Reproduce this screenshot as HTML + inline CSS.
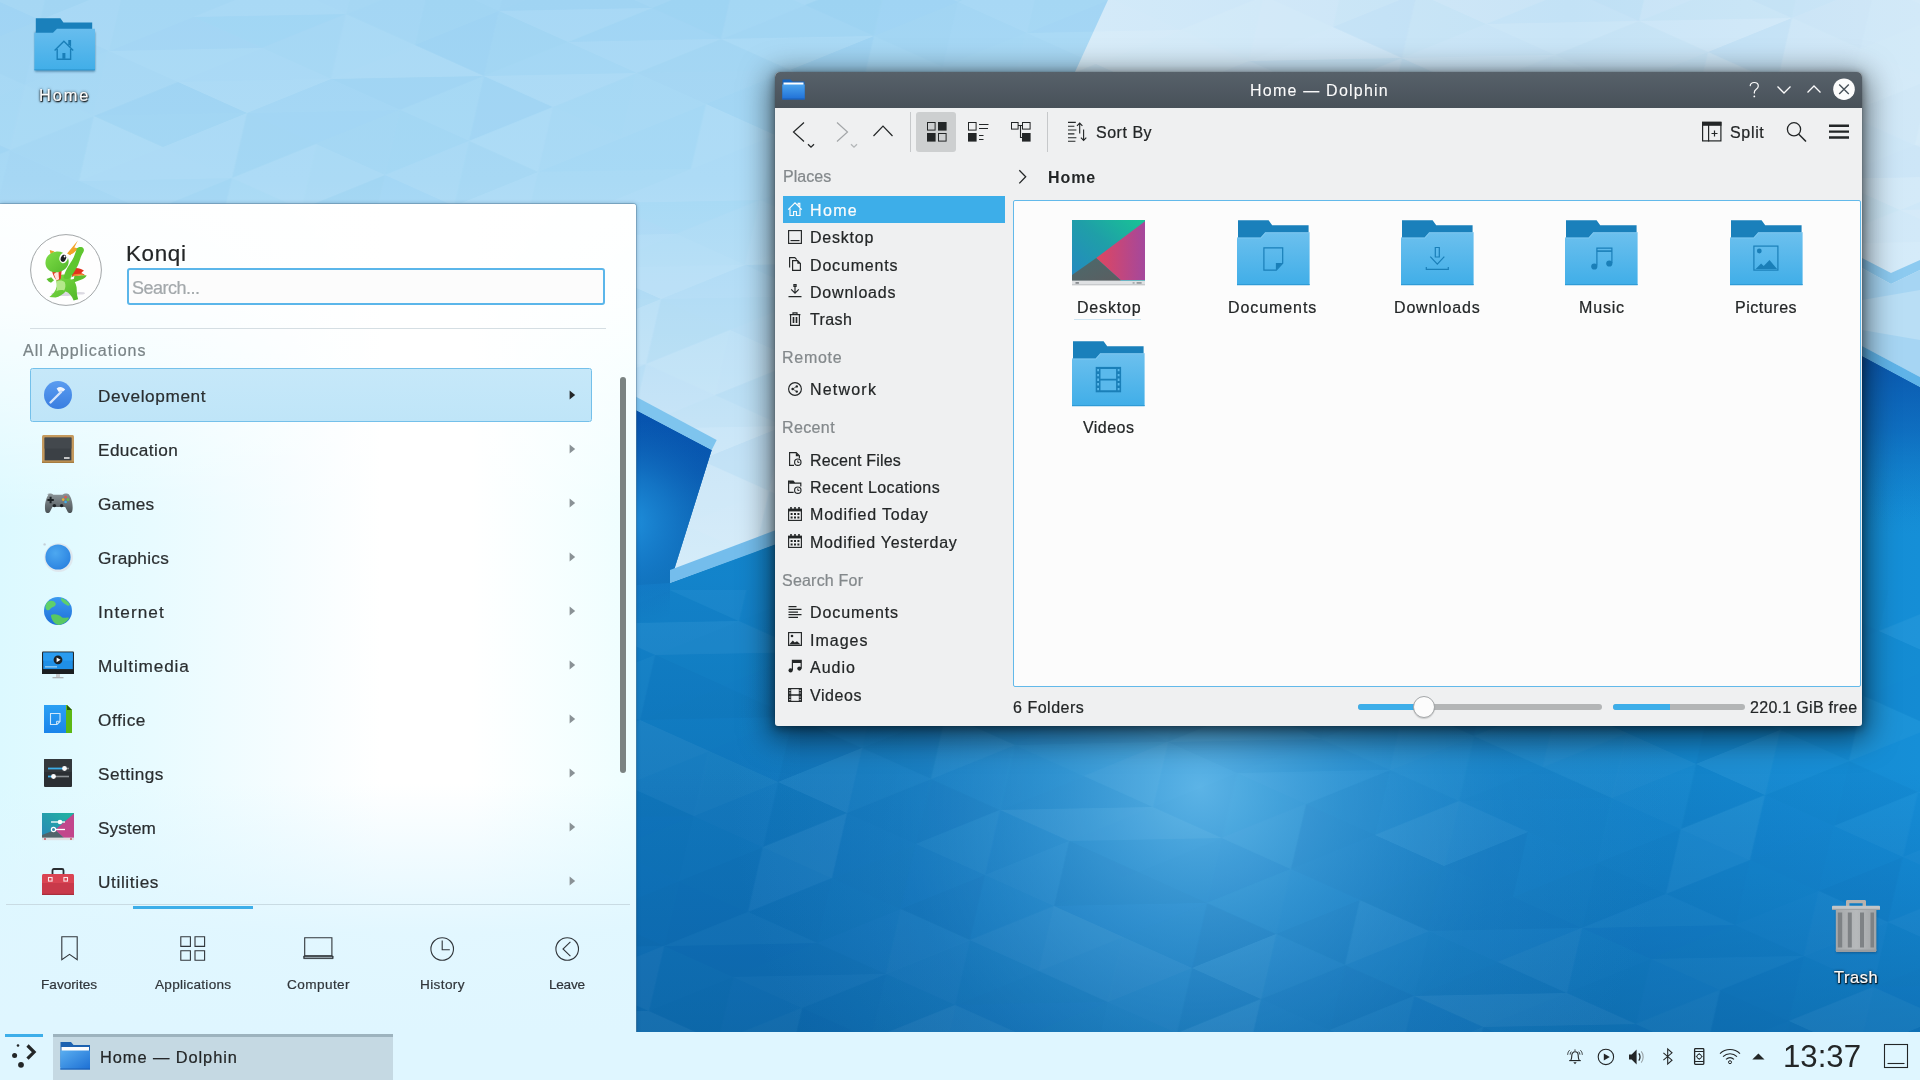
<!DOCTYPE html>
<html><head><meta charset="utf-8"><title>Plasma Desktop</title>
<style>
html,body{margin:0;padding:0;}
body{width:1920px;height:1080px;overflow:hidden;position:relative;background:#a6d8f4;font-family:"Liberation Sans",sans-serif;color:#232627;font-size:16px;}
.abs{position:absolute;}
.t{position:absolute;white-space:pre;line-height:1;will-change:transform;-webkit-text-stroke:.22px;}
svg{position:absolute;overflow:visible;}
#wall{left:0;top:0;}

#dol{position:absolute;left:775px;top:72px;width:1087px;height:654px;background:#eff0f1;border-radius:5px 5px 3px 3px;box-shadow:0 7px 30px 5px rgba(0,0,0,.55),0 2px 9px 1px rgba(0,0,0,.35),0 0 0 1px rgba(0,0,0,.05);}
#dtitle{position:absolute;left:0;top:0;width:1087px;height:36px;background:linear-gradient(#57616a,#485159);border-radius:5px 5px 0 0;}
#dview{position:absolute;left:238px;top:128px;width:846px;height:485px;background:#fcfcfc;border:1px solid #62b9ea;border-radius:2px;}
.sep{position:absolute;width:1px;background:#c6c8ca;top:40px;height:40px;}
.ic{stroke:#232627;fill:none;stroke-width:1;}
.fi{fill:#232627;stroke:none;}
.row{position:absolute;left:8px;width:222px;height:27px;}
#kick{position:absolute;left:0;top:204px;width:636px;height:828px;background:linear-gradient(90deg,#dcf9ff 0,#e8fbff 24%,#f6fdff 46%,#ffffff 60%,#ffffff 74%,#eefeff 100%);box-shadow:0 0 4px rgba(0,40,80,.35),0 0 0 1px rgba(110,150,175,.5);border-top-right-radius:3px;overflow:hidden;}
#kick .fade{position:absolute;left:0;top:0;width:636px;height:828px;background:linear-gradient(180deg,rgba(255,255,255,.95) 0,rgba(255,255,255,.85) 12%,rgba(255,255,255,0) 38%,rgba(223,246,255,0) 70%,rgba(223,246,255,.9) 88%,#dff6ff 100%);}
#panel{position:absolute;left:0;top:1032px;width:1920px;height:48px;background:#dff6ff;}
.dl{color:#fcfcfc;text-shadow:0 1px 2px rgba(0,0,0,.95),0 0 3px rgba(0,0,0,.7),1px 1px 1px rgba(0,0,0,.8);}
</style></head>
<body>
<svg id="wall" width="1920" height="1080" viewBox="0 0 1920 1080">
<defs>
<linearGradient id="sky" x1="0" y1="0" x2="0" y2="600" gradientUnits="userSpaceOnUse"><stop offset="0" stop-color="#a3d6f4"/><stop offset=".3" stop-color="#a8d9f5"/><stop offset=".7" stop-color="#c6e4f7"/><stop offset=".95" stop-color="#d4ebf9"/></linearGradient>
<linearGradient id="sea" x1="0" y1="0" x2="1" y2="0"><stop offset="0" stop-color="#0a6cb0"/><stop offset=".33" stop-color="#0f76bb"/><stop offset=".45" stop-color="#1076ba"/><stop offset=".8" stop-color="#1381c6"/><stop offset="1" stop-color="#158fd7"/></linearGradient>
<linearGradient id="seav" x1="0" y1="300" x2="0" y2="1080" gradientUnits="userSpaceOnUse"><stop offset="0" stop-color="#0a55a8" stop-opacity=".6"/><stop offset=".3" stop-color="#0a55a8" stop-opacity="0"/><stop offset=".6" stop-color="#0a55a8" stop-opacity="0"/><stop offset="1" stop-color="#0a5a96" stop-opacity=".6"/></linearGradient>
<radialGradient id="glow" cx="1200" cy="788" r="470" gradientUnits="userSpaceOnUse"><stop offset="0" stop-color="#62b9ea" stop-opacity=".92"/><stop offset=".3" stop-color="#45a5df" stop-opacity=".62"/><stop offset=".65" stop-color="#2f93d4" stop-opacity=".25"/><stop offset="1" stop-color="#2b8fd2" stop-opacity="0"/></radialGradient>
<radialGradient id="glowL" cx="626" cy="522" r="104" gradientUnits="userSpaceOnUse"><stop offset="0" stop-color="#2092de"/><stop offset=".45" stop-color="#167bca" stop-opacity=".75"/><stop offset="1" stop-color="#0f66b8" stop-opacity="0"/></radialGradient>
<linearGradient id="lbright" x1="0" y1="575" x2="0" y2="800" gradientUnits="userSpaceOnUse"><stop offset="0" stop-color="#1488d0" stop-opacity=".75"/><stop offset="1" stop-color="#1488d0" stop-opacity="0"/></linearGradient>
<linearGradient id="ldark" x1="0" y1="370" x2="0" y2="600" gradientUnits="userSpaceOnUse"><stop offset="0" stop-color="#0550ae"/><stop offset=".45" stop-color="#0958b0" stop-opacity=".95"/><stop offset=".75" stop-color="#0c62b4" stop-opacity=".55"/><stop offset="1" stop-color="#1072b8" stop-opacity="0"/></linearGradient>
<linearGradient id="rdark" x1="0" y1="356" x2="0" y2="520" gradientUnits="userSpaceOnUse"><stop offset="0" stop-color="#0a56ac" stop-opacity=".95"/><stop offset=".45" stop-color="#0c62b8" stop-opacity=".6"/><stop offset="1" stop-color="#1280cc" stop-opacity="0"/></linearGradient>
<linearGradient id="lite" x1="0" y1="0" x2="1" y2="0"><stop offset="0" stop-color="#d6ecf9"/><stop offset=".25" stop-color="#d0e8f8"/><stop offset=".6" stop-color="#c6e3f6"/><stop offset="1" stop-color="#d2e9f8"/></linearGradient>
<pattern id="tsky" width="6" height="6" patternUnits="userSpaceOnUse" patternTransform="matrix(69 31 -84 34 40 20)"><polygon points="0,0 1,0 1,1" fill="#ffffff" fill-opacity="0.007"/><polygon points="0,0 0,1 1,1" fill="#5aaee0" fill-opacity="0.020"/><polygon points="0,1 1,1 1,2" fill="#ffffff" fill-opacity="0.019"/><polygon points="0,1 0,2 1,2" fill="#5aaee0" fill-opacity="0.065"/><polygon points="0,2 1,2 1,3" fill="#ffffff" fill-opacity="0.051"/><polygon points="0,2 0,3 1,3" fill="#5aaee0" fill-opacity="0.036"/><polygon points="0,3 1,3 1,4" fill="#ffffff" fill-opacity="0.074"/><polygon points="0,3 0,4 1,4" fill="#5aaee0" fill-opacity="0.004"/><polygon points="0,4 1,4 0,5" fill="#5aaee0" fill-opacity="0.004"/><polygon points="1,4 1,5 0,5" fill="#ffffff" fill-opacity="0.021"/><polygon points="0,5 1,5 1,6" fill="#ffffff" fill-opacity="0.020"/><polygon points="0,5 0,6 1,6" fill="#ffffff" fill-opacity="0.055"/><polygon points="1,0 2,0 2,1" fill="#ffffff" fill-opacity="0.036"/><polygon points="1,0 1,1 2,1" fill="#ffffff" fill-opacity="0.026"/><polygon points="1,1 2,1 2,2" fill="#ffffff" fill-opacity="0.039"/><polygon points="1,1 1,2 2,2" fill="#ffffff" fill-opacity="0.014"/><polygon points="1,2 2,2 2,3" fill="#5aaee0" fill-opacity="0.070"/><polygon points="1,2 1,3 2,3" fill="#ffffff" fill-opacity="0.055"/><polygon points="1,3 2,3 2,4" fill="#ffffff" fill-opacity="0.033"/><polygon points="1,3 1,4 2,4" fill="#ffffff" fill-opacity="0.057"/><polygon points="1,4 2,4 1,5" fill="#ffffff" fill-opacity="0.063"/><polygon points="2,4 2,5 1,5" fill="#5aaee0" fill-opacity="0.016"/><polygon points="1,5 2,5 1,6" fill="#5aaee0" fill-opacity="0.008"/><polygon points="2,5 2,6 1,6" fill="#ffffff" fill-opacity="0.065"/><polygon points="2,0 3,0 2,1" fill="#5aaee0" fill-opacity="0.060"/><polygon points="3,0 3,1 2,1" fill="#5aaee0" fill-opacity="0.055"/><polygon points="2,1 3,1 3,2" fill="#ffffff" fill-opacity="0.070"/><polygon points="2,1 2,2 3,2" fill="#5aaee0" fill-opacity="0.010"/><polygon points="2,2 3,2 3,3" fill="#5aaee0" fill-opacity="0.030"/><polygon points="2,2 2,3 3,3" fill="#ffffff" fill-opacity="0.001"/><polygon points="2,3 3,3 3,4" fill="#5aaee0" fill-opacity="0.022"/><polygon points="2,3 2,4 3,4" fill="#ffffff" fill-opacity="0.013"/><polygon points="2,4 3,4 3,5" fill="#ffffff" fill-opacity="0.061"/><polygon points="2,4 2,5 3,5" fill="#ffffff" fill-opacity="0.027"/><polygon points="2,5 3,5 2,6" fill="#ffffff" fill-opacity="0.053"/><polygon points="3,5 3,6 2,6" fill="#ffffff" fill-opacity="0.074"/><polygon points="3,0 4,0 4,1" fill="#5aaee0" fill-opacity="0.051"/><polygon points="3,0 3,1 4,1" fill="#ffffff" fill-opacity="0.054"/><polygon points="3,1 4,1 3,2" fill="#ffffff" fill-opacity="0.061"/><polygon points="4,1 4,2 3,2" fill="#ffffff" fill-opacity="0.010"/><polygon points="3,2 4,2 3,3" fill="#5aaee0" fill-opacity="0.043"/><polygon points="4,2 4,3 3,3" fill="#ffffff" fill-opacity="0.050"/><polygon points="3,3 4,3 4,4" fill="#5aaee0" fill-opacity="0.032"/><polygon points="3,3 3,4 4,4" fill="#5aaee0" fill-opacity="0.065"/><polygon points="3,4 4,4 3,5" fill="#ffffff" fill-opacity="0.073"/><polygon points="4,4 4,5 3,5" fill="#5aaee0" fill-opacity="0.062"/><polygon points="3,5 4,5 3,6" fill="#5aaee0" fill-opacity="0.013"/><polygon points="4,5 4,6 3,6" fill="#5aaee0" fill-opacity="0.052"/><polygon points="4,0 5,0 5,1" fill="#ffffff" fill-opacity="0.040"/><polygon points="4,0 4,1 5,1" fill="#ffffff" fill-opacity="0.056"/><polygon points="4,1 5,1 5,2" fill="#ffffff" fill-opacity="0.017"/><polygon points="4,1 4,2 5,2" fill="#5aaee0" fill-opacity="0.068"/><polygon points="4,2 5,2 4,3" fill="#5aaee0" fill-opacity="0.025"/><polygon points="5,2 5,3 4,3" fill="#ffffff" fill-opacity="0.057"/><polygon points="4,3 5,3 4,4" fill="#ffffff" fill-opacity="0.001"/><polygon points="5,3 5,4 4,4" fill="#ffffff" fill-opacity="0.075"/><polygon points="4,4 5,4 5,5" fill="#5aaee0" fill-opacity="0.063"/><polygon points="4,4 4,5 5,5" fill="#ffffff" fill-opacity="0.015"/><polygon points="4,5 5,5 5,6" fill="#5aaee0" fill-opacity="0.045"/><polygon points="4,5 4,6 5,6" fill="#5aaee0" fill-opacity="0.014"/><polygon points="5,0 6,0 6,1" fill="#5aaee0" fill-opacity="0.052"/><polygon points="5,0 5,1 6,1" fill="#5aaee0" fill-opacity="0.069"/><polygon points="5,1 6,1 5,2" fill="#5aaee0" fill-opacity="0.028"/><polygon points="6,1 6,2 5,2" fill="#ffffff" fill-opacity="0.069"/><polygon points="5,2 6,2 5,3" fill="#5aaee0" fill-opacity="0.018"/><polygon points="6,2 6,3 5,3" fill="#5aaee0" fill-opacity="0.006"/><polygon points="5,3 6,3 6,4" fill="#ffffff" fill-opacity="0.022"/><polygon points="5,3 5,4 6,4" fill="#ffffff" fill-opacity="0.014"/><polygon points="5,4 6,4 6,5" fill="#ffffff" fill-opacity="0.018"/><polygon points="5,4 5,5 6,5" fill="#ffffff" fill-opacity="0.066"/><polygon points="5,5 6,5 6,6" fill="#5aaee0" fill-opacity="0.010"/><polygon points="5,5 5,6 6,6" fill="#ffffff" fill-opacity="0.033"/></pattern><pattern id="tsea" width="6" height="6" patternUnits="userSpaceOnUse" patternTransform="matrix(69 31 -84 34 40 20)"><polygon points="0,0 1,0 1,1" fill="#003070" fill-opacity="0.034"/><polygon points="0,0 0,1 1,1" fill="#ffffff" fill-opacity="0.014"/><polygon points="0,1 1,1 1,2" fill="#ffffff" fill-opacity="0.003"/><polygon points="0,1 0,2 1,2" fill="#003070" fill-opacity="0.013"/><polygon points="0,2 1,2 1,3" fill="#ffffff" fill-opacity="0.001"/><polygon points="0,2 0,3 1,3" fill="#003070" fill-opacity="0.044"/><polygon points="0,3 1,3 1,4" fill="#003070" fill-opacity="0.041"/><polygon points="0,3 0,4 1,4" fill="#003070" fill-opacity="0.039"/><polygon points="0,4 1,4 1,5" fill="#ffffff" fill-opacity="0.031"/><polygon points="0,4 0,5 1,5" fill="#003070" fill-opacity="0.036"/><polygon points="0,5 1,5 1,6" fill="#ffffff" fill-opacity="0.012"/><polygon points="0,5 0,6 1,6" fill="#ffffff" fill-opacity="0.043"/><polygon points="1,0 2,0 2,1" fill="#003070" fill-opacity="0.010"/><polygon points="1,0 1,1 2,1" fill="#ffffff" fill-opacity="0.046"/><polygon points="1,1 2,1 2,2" fill="#ffffff" fill-opacity="0.034"/><polygon points="1,1 1,2 2,2" fill="#003070" fill-opacity="0.020"/><polygon points="1,2 2,2 2,3" fill="#003070" fill-opacity="0.037"/><polygon points="1,2 1,3 2,3" fill="#003070" fill-opacity="0.018"/><polygon points="1,3 2,3 1,4" fill="#003070" fill-opacity="0.031"/><polygon points="2,3 2,4 1,4" fill="#ffffff" fill-opacity="0.008"/><polygon points="1,4 2,4 2,5" fill="#003070" fill-opacity="0.012"/><polygon points="1,4 1,5 2,5" fill="#ffffff" fill-opacity="0.005"/><polygon points="1,5 2,5 2,6" fill="#003070" fill-opacity="0.042"/><polygon points="1,5 1,6 2,6" fill="#003070" fill-opacity="0.028"/><polygon points="2,0 3,0 3,1" fill="#003070" fill-opacity="0.007"/><polygon points="2,0 2,1 3,1" fill="#003070" fill-opacity="0.018"/><polygon points="2,1 3,1 3,2" fill="#003070" fill-opacity="0.004"/><polygon points="2,1 2,2 3,2" fill="#003070" fill-opacity="0.019"/><polygon points="2,2 3,2 2,3" fill="#ffffff" fill-opacity="0.019"/><polygon points="3,2 3,3 2,3" fill="#003070" fill-opacity="0.025"/><polygon points="2,3 3,3 3,4" fill="#ffffff" fill-opacity="0.002"/><polygon points="2,3 2,4 3,4" fill="#ffffff" fill-opacity="0.036"/><polygon points="2,4 3,4 2,5" fill="#003070" fill-opacity="0.020"/><polygon points="3,4 3,5 2,5" fill="#ffffff" fill-opacity="0.046"/><polygon points="2,5 3,5 3,6" fill="#003070" fill-opacity="0.008"/><polygon points="2,5 2,6 3,6" fill="#ffffff" fill-opacity="0.025"/><polygon points="3,0 4,0 4,1" fill="#003070" fill-opacity="0.001"/><polygon points="3,0 3,1 4,1" fill="#003070" fill-opacity="0.044"/><polygon points="3,1 4,1 4,2" fill="#ffffff" fill-opacity="0.025"/><polygon points="3,1 3,2 4,2" fill="#ffffff" fill-opacity="0.007"/><polygon points="3,2 4,2 3,3" fill="#003070" fill-opacity="0.018"/><polygon points="4,2 4,3 3,3" fill="#ffffff" fill-opacity="0.019"/><polygon points="3,3 4,3 4,4" fill="#ffffff" fill-opacity="0.008"/><polygon points="3,3 3,4 4,4" fill="#003070" fill-opacity="0.004"/><polygon points="3,4 4,4 3,5" fill="#ffffff" fill-opacity="0.043"/><polygon points="4,4 4,5 3,5" fill="#003070" fill-opacity="0.002"/><polygon points="3,5 4,5 4,6" fill="#003070" fill-opacity="0.042"/><polygon points="3,5 3,6 4,6" fill="#ffffff" fill-opacity="0.019"/><polygon points="4,0 5,0 5,1" fill="#ffffff" fill-opacity="0.047"/><polygon points="4,0 4,1 5,1" fill="#ffffff" fill-opacity="0.031"/><polygon points="4,1 5,1 5,2" fill="#003070" fill-opacity="0.011"/><polygon points="4,1 4,2 5,2" fill="#ffffff" fill-opacity="0.016"/><polygon points="4,2 5,2 5,3" fill="#003070" fill-opacity="0.004"/><polygon points="4,2 4,3 5,3" fill="#003070" fill-opacity="0.032"/><polygon points="4,3 5,3 5,4" fill="#003070" fill-opacity="0.042"/><polygon points="4,3 4,4 5,4" fill="#ffffff" fill-opacity="0.026"/><polygon points="4,4 5,4 5,5" fill="#003070" fill-opacity="0.024"/><polygon points="4,4 4,5 5,5" fill="#003070" fill-opacity="0.010"/><polygon points="4,5 5,5 4,6" fill="#003070" fill-opacity="0.040"/><polygon points="5,5 5,6 4,6" fill="#003070" fill-opacity="0.005"/><polygon points="5,0 6,0 6,1" fill="#ffffff" fill-opacity="0.037"/><polygon points="5,0 5,1 6,1" fill="#ffffff" fill-opacity="0.031"/><polygon points="5,1 6,1 5,2" fill="#003070" fill-opacity="0.021"/><polygon points="6,1 6,2 5,2" fill="#003070" fill-opacity="0.008"/><polygon points="5,2 6,2 6,3" fill="#ffffff" fill-opacity="0.037"/><polygon points="5,2 5,3 6,3" fill="#ffffff" fill-opacity="0.044"/><polygon points="5,3 6,3 6,4" fill="#003070" fill-opacity="0.031"/><polygon points="5,3 5,4 6,4" fill="#003070" fill-opacity="0.026"/><polygon points="5,4 6,4 6,5" fill="#003070" fill-opacity="0.001"/><polygon points="5,4 5,5 6,5" fill="#ffffff" fill-opacity="0.009"/><polygon points="5,5 6,5 6,6" fill="#003070" fill-opacity="0.048"/><polygon points="5,5 5,6 6,6" fill="#003070" fill-opacity="0.008"/></pattern>
</defs>
<rect width="1920" height="1080" fill="url(#sky)"/>
<polygon points="1108,0 1920,0 1920,420 1040,420 1075,72" fill="url(#lite)"/>
<rect width="1920" height="600" fill="url(#tsky)"/>
<!-- sea -->
<polygon points="560,370 711.7,450 670,583 800,535 1862,535 1862,356 1920,387 1920,1080 0,1080 0,370" fill="url(#sea)"/>
<polygon points="560,370 711.7,450 670,583 800,535 1862,535 1862,356 1920,387 1920,1080 0,1080 0,370" fill="url(#seav)"/>
<polygon points="560,590 670,583 800,535 800,800 560,800" fill="url(#lbright)"/>
<polygon points="560,370 711.7,450 670,583 670,600 560,600" fill="url(#ldark)"/>
<polygon points="560,370 711.7,450 670,583 670,640 560,640" fill="url(#glowL)"/>
<rect x="600" y="600" width="1320" height="480" fill="url(#glow)"/>
<rect x="600" y="590" width="1320" height="490" fill="url(#tsea)"/>
<polygon points="1840,344 1920,387 1920,520 1840,520" fill="url(#rdark)"/>
<!-- bands -->
<polygon points="560,356 716.7,440 711.7,450 560,370" fill="#7ec4ee"/>
<polygon points="670,570 755,538 800,521 800,535 755,552 670,583" fill="#74bdec"/>
<polygon points="1862,258 1891,273 1920,260 1920,270 1891,284 1862,268" fill="#8ccaf0"/>
<polygon points="1862,268 1891,284 1920,270 1920,377 1862,346" fill="#a6d5f3"/>
<polygon points="1862,300 1920,290 1920,340 1862,330" fill="#b9def5"/>
<polygon points="1862,346 1920,377 1920,387 1862,356" fill="#5fb3e8"/>
</svg>
<svg style="left:34.0px;top:17.5px" width="62" height="56" viewBox="0 0 62 56"><defs><linearGradient id="hf" x1="0" y1="0" x2="0" y2="1"><stop offset="0" stop-color="#67bdee"/><stop offset="1" stop-color="#41aee8"/></linearGradient><filter id="hs" x="-10%" y="-10%" width="120%" height="130%"><feGaussianBlur stdDeviation="1.2"/></filter></defs>
<rect x="1" y="14" width="60" height="39.5" fill="#0b3a5e" opacity=".55" filter="url(#hs)"/>
<path d="M1.8.3h24.6l3 4.3h28.8v26h-56.4z" fill="#1a80bb"/>
<path d="M.4 14.7h18.6l4-3.9h38v41.4h-60.6z" fill="url(#hf)"/>
<path d="M.4 51.2h60.6v1h-60.6z" fill="#2f98d2"/>
<path d="M20.6 32.6l9.3-9.4l9.3 9.4M23.2 31v10.2h13.4v-10.2M35 27v-4.3h1.4v5.7" fill="none" stroke="#1a7fb8" stroke-width="1.4"/><rect x="28.4" y="35" width="3" height="5.8" fill="#1a7fb8"/></svg><div class="t dl" style="left:39.2px;top:87px;font-size:16.4px;letter-spacing:1.90px;">Home</div><svg style="left:1830.0px;top:899.0px" width="52" height="56" viewBox="0 0 52 56"><defs><linearGradient id="tb" x1="0" y1="0" x2="1" y2="0"><stop offset="0" stop-color="#a5a8aa"/><stop offset=".5" stop-color="#b6b9bb"/><stop offset="1" stop-color="#a2a5a7"/></linearGradient><filter id="ts" x="-10%" y="-10%" width="120%" height="130%"><feGaussianBlur stdDeviation="1"/></filter></defs>
<rect x="6.5" y="12" width="40" height="42" fill="#0a3258" opacity=".45" filter="url(#ts)"/>
<path d="M16 7.5v-5c0-.8.6-1.4 1.4-1.4h17.2c.8 0 1.4.6 1.4 1.4v5h-3.4v-3.3h-13.2v3.3z" fill="#b9b2ad"/>
<rect x="2" y="6.8" width="48" height="4.2" rx="1" fill="#c3c5c7"/><rect x="2" y="9.8" width="48" height="1.2" fill="#a0a3a5"/>
<path d="M5.8 11h40.6v40.5c0 .9-.7 1.5-1.5 1.5h-37.6c-.8 0-1.5-.6-1.5-1.5z" fill="url(#tb)"/>
<path d="M7.8 13.5h4.4v35h-4.4zM17.8 13.5h4v35h-4zM30 13.5h4v35h-4zM40.5 13.5h3.5v35h-3.5z" fill="#7e8285"/>
<path d="M5.8 50.5h40.6v1c0 .9-.7 1.5-1.5 1.5h-37.6c-.8 0-1.5-.6-1.5-1.5z" fill="#9a9da0"/></svg><div class="t dl" style="left:1833.6px;top:969px;font-size:16.4px;letter-spacing:0.59px;">Trash</div>
<div id="kick"><div class="fade"></div><svg style="left:30.0px;top:30.0px" width="72" height="72" viewBox="0 0 72 72"><defs><linearGradient id="kq" x1="0" y1="0" x2="1" y2="1"><stop offset="0" stop-color="#80de48"/><stop offset="1" stop-color="#52b82a"/></linearGradient></defs>
<circle cx="36" cy="36" r="35.4" fill="#fefefe" stroke="#a2a6a8" stroke-width="1"/>
<ellipse cx="33" cy="60" rx="12" ry="2" fill="#d9d5e2"/><ellipse cx="50" cy="59.3" rx="5" ry="1.2" fill="#dcdae2"/>
<path d="M37.1 19.5l10.8-13.1l-3.6 7l4.3 1.2l-8 7z" fill="#f3a327"/>
<path d="M19.7 16l4.8 1.6l-3.7 3.6z" fill="#e8a02c"/>
<path d="M41.5 42c5 .5 10.5-1.4 15.2-.4c-1.5 3-5.5 4.2-9 5.4c-3 1-5 2-6.5 4z" fill="#5cc02e"/>
<path d="M40.4 36c3-2.7 9-2.6 13.6.8c-1.2.6-2.2 1.4-2.8 2.4c1.6.2 2.8.8 3.7 2c-3.5-.4-8 .2-12.5 1.3z" fill="#e2321e"/><path d="M43.5 40.6c3-.8 6-1 8.8-.6c.9.3 1.7.8 2.2 1.5c-3.5-.4-7.5.1-11.5 1z" fill="#f08a2a"/>
<path d="M26 43c3-3 11-3.4 15.5.2c4 4.3 5.5 9 5.3 13.5c-.1 3.2.6 6 1.4 8.5l-4.6 1.2c-1.5-4.2-4.2-7.7-8-9c-2.5 2.8-6.5 5.2-10 6.2l-6.2-.6c3.8-2.8 6.5-6.2 7.3-10.5c.6-3.8-1.2-6.6-.7-9.5z" fill="url(#kq)"/>
<path d="M26.5 47.5c2.5-1.7 6.5-1.4 8.3 .8c1 2.7.8 5.7-.6 8.2c-2.7-.8-5.4-.6-7.8.8c.8-3.2.6-6.5.1-9.8z" fill="#b4e88a"/>
<path d="M16.5 45l4.7-1.8l2.8 3l-3 2.6l-2.4-1.3z" fill="#5cc02e"/>
<path d="M21.8 32.5c3.2-1.6 7.5-1.3 10.2.7l-1.2 11.5c-1.2 1.2-2.7 1.7-4.2 1.7c-3-3.2-5-8.4-4.8-13.9z" fill="#e63a24"/><path d="M23.8 40l4.6-3.4l.6 8.6l-2.6 1.2z" fill="#fde3dd"/>
<path d="M33.5 44c1-6 5-12 8.5-17.5c2-3.2 3.6-8 4.8-11.8c.8-1.5 3.4-2.2 5.4-1.4c1.8.9 2.2 2.9 1.2 4.6c-1.7 2.4-2.7 5.4-3.7 8.6c-1.7 5.4-4.8 11.3-9.2 16.7c-2 2.3-5 2.5-7 .8z" fill="#5fc62f"/>
<path d="M15.6 30.5c-1-6.2 3.2-12 10.2-12.8c6.3-.7 12.1 2.5 12.8 8.7c.6 5.4-3.3 9.9-8.9 11.4c-6.8 1.9-13.2-1.3-14.1-7.3z" fill="url(#kq)"/>
<ellipse cx="33.6" cy="24" rx="4.2" ry="5.2" fill="#fff" transform="rotate(18 33.6 24)"/><ellipse cx="33.4" cy="24.3" rx="2.6" ry="3.7" fill="#1c1f21" transform="rotate(18 33.4 24.3)"/><circle cx="34.6" cy="22.5" r=".9" fill="#fff"/>
<ellipse cx="41.6" cy="22.5" rx="1.7" ry="3" fill="#fff" transform="rotate(25 41.6 22.5)"/>
<path d="M40.8 43.4l3.6-1.3l-.6 2.8l-3.2.6z" fill="#fff"/></svg><div class="t" style="left:126.2px;top:39px;font-size:22.4px;letter-spacing:0.66px;color:#232627;">Konqi</div><div class="abs" style="left:127px;top:64px;width:474px;height:33px;border:2px solid #5bb6ea;border-radius:3px;background:#fcfcfc"></div><div class="t" style="left:131.9px;top:75px;font-size:18px;letter-spacing:-0.51px;color:#a3a8ab;">Search...</div><div class="abs" style="left:30px;top:124px;width:576px;height:1px;background:#d5dee3"></div><div class="t" style="left:22.5px;top:139px;font-size:16px;letter-spacing:0.99px;color:#7a8487;">All Applications</div><div class="abs" style="left:30px;top:164px;width:560px;height:52px;border:1px solid #74c0ea;border-radius:2.5px;background:linear-gradient(#c6e8f9,#bfe5f8)"></div><svg style="left:42.0px;top:175.0px" width="32" height="32" viewBox="0 0 32 32"><defs><linearGradient id="kd" x1="0" y1="0" x2="0" y2="1"><stop offset="0" stop-color="#5a9cf0"/><stop offset="1" stop-color="#3a7ee0"/></linearGradient></defs>
<circle cx="16" cy="16" r="14" fill="url(#kd)"/><path d="M8.5 23.5L19 13" stroke="#d6e6fb" stroke-width="2.4" stroke-linecap="round"/><path d="M14.6 9.4c3-2.2 6.2-1.6 8.6 1.2l-2.4 2.2c-.8-1-1.8-1.2-2.6-.6l-1.2 1z" fill="#eef4fd"/></svg><div class="t" style="left:97.7px;top:184px;font-size:17.2px;letter-spacing:0.63px;color:#2a2e30;">Development</div><svg style="left:568.6px;top:185.5px" width="7" height="10" viewBox="0 0 7 10"><path d="M.6.4l5.6 4.6l-5.6 4.6z" fill="#232627"/></svg><svg style="left:42.0px;top:229.0px" width="32" height="32" viewBox="0 0 32 32"><rect x="0" y="2" width="32" height="28" rx="1.5" fill="#c59a5e"/><rect x="0" y="28.6" width="32" height="1.4" fill="#a67c40"/><rect x="2.6" y="4.6" width="26.8" height="22.8" fill="#3b4045"/><rect x="2.6" y="4.6" width="26.8" height="11" fill="#43484d"/><rect x="22" y="24.2" width="5.6" height="1.6" fill="#e8e8e8"/></svg><div class="t" style="left:97.7px;top:238px;font-size:17.2px;letter-spacing:0.42px;color:#2a2e30;">Education</div><svg style="left:568.6px;top:239.5px" width="7" height="10" viewBox="0 0 7 10"><path d="M.6.4l5.6 4.6l-5.6 4.6z" fill="#8a9296"/></svg><svg style="left:42.0px;top:283.0px" width="32" height="32" viewBox="0 0 32 32"><defs><linearGradient id="kg" x1="0" y1="0" x2="0" y2="1"><stop offset="0" stop-color="#8d9599"/><stop offset="1" stop-color="#4a5256"/></linearGradient></defs>
<path d="M5 7.5c1.5-1.6 5-1.3 6.4.3h9.2c1.4-1.6 4.9-1.9 6.4-.3c2.8 3.4 4.4 11.5 3.3 16.5c-.6 2.7-3.7 2.6-4.8.5l-2.3-4.5h-12.8l-2.3 4.5c-1.1 2.1-4.2 2.2-4.8-.5c-1.1-5 .5-13.1 3.3-16.5z" fill="url(#kg)"/>
<path d="M7.6 9.8h2v2.2h2.2v2h-2.2v2.2h-2v-2.2h-2.2v-2h2.2z" fill="#1d2225"/><circle cx="23.6" cy="10" r="1.3" fill="#e05a4a"/><circle cx="26" cy="12.6" r="1.3" fill="#6cc24a"/><circle cx="21.2" cy="12.6" r="1.3" fill="#e8b030"/><circle cx="23.6" cy="15" r="1.3" fill="#3daee9"/><circle cx="12.4" cy="18.6" r="1.7" fill="#1d2225"/><circle cx="19.6" cy="18.6" r="1.7" fill="#1d2225"/></svg><div class="t" style="left:97.7px;top:292px;font-size:17.2px;letter-spacing:0.18px;color:#2a2e30;">Games</div><svg style="left:568.6px;top:293.5px" width="7" height="10" viewBox="0 0 7 10"><path d="M.6.4l5.6 4.6l-5.6 4.6z" fill="#8a9296"/></svg><svg style="left:42.0px;top:337.0px" width="32" height="32" viewBox="0 0 32 32"><defs><radialGradient id="kx" cx=".4" cy=".35" r=".7"><stop offset="0" stop-color="#4da8f0"/><stop offset="1" stop-color="#2a82e0"/></radialGradient></defs>
<circle cx="16.6" cy="16.6" r="14.4" fill="#dfe6ec" opacity=".9"/><circle cx="16" cy="16" r="12.6" fill="url(#kx)"/><circle cx="2.6" cy="3.4" r="1.2" fill="#c5d0d8"/></svg><div class="t" style="left:97.7px;top:346px;font-size:17.2px;letter-spacing:0.29px;color:#2a2e30;">Graphics</div><svg style="left:568.6px;top:347.5px" width="7" height="10" viewBox="0 0 7 10"><path d="M.6.4l5.6 4.6l-5.6 4.6z" fill="#8a9296"/></svg><svg style="left:42.0px;top:391.0px" width="32" height="32" viewBox="0 0 32 32"><defs><linearGradient id="kn" x1="0" y1="0" x2="0" y2="1"><stop offset="0" stop-color="#3b9af0"/><stop offset="1" stop-color="#1f6fd8"/></linearGradient></defs>
<circle cx="16" cy="16" r="14" fill="url(#kn)"/><path d="M6 6.5c3-1.5 6-1 7.5 1.5c1 2-1 3.5-3.5 4.5c-2 1-2.5 3.5-5 2.5c-2-1-2.5-5.5 1-8.5z" fill="#5fd06a"/><path d="M19 3c3 .5 7 3 9 7c-2 1.5-3.5 0-5-1c-2-1.5-4.5-3-4-6z" fill="#5fd06a"/><path d="M9 20c3-1.5 8-.5 10.5 2c2 2 6-.5 7.5 1c-2 4-6 6.5-10.5 7c-4-1-7.5-5-7.5-10z" fill="#58c862"/></svg><div class="t" style="left:97.7px;top:400px;font-size:17.2px;letter-spacing:1.07px;color:#2a2e30;">Internet</div><svg style="left:568.6px;top:401.5px" width="7" height="10" viewBox="0 0 7 10"><path d="M.6.4l5.6 4.6l-5.6 4.6z" fill="#8a9296"/></svg><svg style="left:42.0px;top:445.0px" width="32" height="32" viewBox="0 0 32 32"><rect x="0" y="2.5" width="32" height="22.5" rx="1" fill="#23272a"/><rect x="1.2" y="3.6" width="29.6" height="16.6" fill="#1f8fe6"/><rect x="1.2" y="3.6" width="29.6" height="8" fill="#2a9cf0"/><circle cx="16" cy="10.8" r="4.4" fill="#1d2124"/><path d="M14.6 8.4l4 2.4l-4 2.4z" fill="#fff"/><rect x="3" y="17.2" width="12" height="1.3" fill="#9ad0f5"/><rect x="0" y="20.4" width="32" height="4.6" fill="#1b1e20"/><path d="M14 25h4v3.2h-4z" fill="#c8ccce"/><rect x="10.5" y="28" width="11" height="1.3" fill="#b0b4b6"/></svg><div class="t" style="left:97.7px;top:454px;font-size:17.2px;letter-spacing:0.86px;color:#2a2e30;">Multimedia</div><svg style="left:568.6px;top:455.5px" width="7" height="10" viewBox="0 0 7 10"><path d="M.6.4l5.6 4.6l-5.6 4.6z" fill="#8a9296"/></svg><svg style="left:42.0px;top:499.0px" width="32" height="32" viewBox="0 0 32 32"><defs><linearGradient id="ko" x1="0" y1="0" x2="0" y2="1"><stop offset="0" stop-color="#2aa0f4"/><stop offset="1" stop-color="#1a84ea"/></linearGradient></defs>
<path d="M19 2h6l5 5v23h-11z" fill="#5cb814"/><path d="M25 2l5 5h-5z" fill="#2c5a08"/><rect x="2" y="2" width="22" height="28" fill="url(#ko)"/><path d="M8.5 10.5h9.5v8l-3 3h-6.5z" fill="none" stroke="#cfe8fb" stroke-width="1.1"/><path d="M14.6 21.5v-3.2h3.2" fill="none" stroke="#cfe8fb" stroke-width="1"/></svg><div class="t" style="left:97.7px;top:508px;font-size:17.2px;letter-spacing:0.57px;color:#2a2e30;">Office</div><svg style="left:568.6px;top:509.5px" width="7" height="10" viewBox="0 0 7 10"><path d="M.6.4l5.6 4.6l-5.6 4.6z" fill="#8a9296"/></svg><svg style="left:42.0px;top:553.0px" width="32" height="32" viewBox="0 0 32 32"><rect x="2" y="2" width="28" height="28" rx="1" fill="#2b2f33"/><rect x="2" y="2" width="28" height="13" rx="1" fill="#33383c"/><path d="M6 11.5h16" stroke="#3daee9" stroke-width="1.8"/><path d="M22 11.5h5" stroke="#8b9094" stroke-width="1.6"/><circle cx="22.5" cy="11.5" r="2.4" fill="#fcfcfc"/><path d="M6 19.5h5" stroke="#3daee9" stroke-width="1.8"/><path d="M12 19.5h15" stroke="#8b9094" stroke-width="1.6"/><circle cx="11.5" cy="19.5" r="2.4" fill="#fcfcfc"/></svg><div class="t" style="left:97.7px;top:562px;font-size:17.2px;letter-spacing:0.46px;color:#2a2e30;">Settings</div><svg style="left:568.6px;top:563.5px" width="7" height="10" viewBox="0 0 7 10"><path d="M.6.4l5.6 4.6l-5.6 4.6z" fill="#8a9296"/></svg><svg style="left:42.0px;top:607.0px" width="32" height="32" viewBox="0 0 32 32"><defs><linearGradient id="ks" x1="0" y1="1" x2="1" y2="0"><stop offset="0" stop-color="#2a86b8"/><stop offset="1" stop-color="#1fb5a0"/></linearGradient></defs>
<rect x="0" y="2" width="32" height="26" fill="url(#ks)"/><path d="M32 2.5L13 19l10 9h9z" fill="#c2468c"/><path d="M0 24l13-5l10 9h-23z" fill="#51646a"/><rect x="0" y="26.6" width="32" height="2.6" fill="#dfe1e3"/><rect x="2" y="27.4" width="2" height="1.2" fill="#c03a4a"/><rect x="28" y="27.4" width="2" height="1.2" fill="#c03a4a"/><path d="M9 11h14" stroke="#fff" stroke-width="1.3"/><circle cx="18" cy="11" r="2.3" fill="#fff"/><path d="M9 18.5h14" stroke="#fff" stroke-width="1.3"/><circle cx="11.5" cy="18.5" r="2.1" fill="#3a8aa8" stroke="#fff" stroke-width="1.2"/></svg><div class="t" style="left:97.7px;top:616px;font-size:17.2px;letter-spacing:0.12px;color:#2a2e30;">System</div><svg style="left:568.6px;top:617.5px" width="7" height="10" viewBox="0 0 7 10"><path d="M.6.4l5.6 4.6l-5.6 4.6z" fill="#8a9296"/></svg><svg style="left:42.0px;top:661.0px" width="32" height="32" viewBox="0 0 32 32"><path d="M10.5 9v-3.6c0-.9.6-1.4 1.4-1.4h8.2c.8 0 1.4.5 1.4 1.4v3.6" fill="none" stroke="#2a2e32" stroke-width="1.8"/><path d="M1.5 9h29c.8 0 1.5.7 1.5 1.5v19.5h-32v-19.5c0-.8.7-1.5 1.5-1.5z" fill="#da4453"/><rect x="0" y="18" width="32" height="12" fill="#c9394a"/><rect x="0" y="28.8" width="32" height="1.2" fill="#a82e3c"/><rect x="6.5" y="12.5" width="3.6" height="3.6" fill="none" stroke="#fbe4e6" stroke-width="1.1"/><rect x="21.9" y="12.5" width="3.6" height="3.6" fill="none" stroke="#fbe4e6" stroke-width="1.1"/></svg><div class="t" style="left:97.7px;top:670px;font-size:17.2px;letter-spacing:0.63px;color:#2a2e30;">Utilities</div><svg style="left:568.6px;top:671.5px" width="7" height="10" viewBox="0 0 7 10"><path d="M.6.4l5.6 4.6l-5.6 4.6z" fill="#8a9296"/></svg><div class="abs" style="left:620px;top:173px;width:6px;height:396px;border-radius:3px;background:#7b8382"></div><div class="abs" style="left:6px;top:700px;width:624px;height:1px;background:#c9dbe3"></div><div class="abs" style="left:133px;top:701.5px;width:119.5px;height:3.5px;background:#3daee9"></div><svg style="left:60.5px;top:732.3px" width="17" height="25" viewBox="0 0 17 25"><path d="M.8.8h15.4v22.8l-7.7-5.2l-7.7 5.2z" stroke="#31363b" fill="none" stroke-width="1.1"/></svg><svg style="left:180.3px;top:732.3px" width="26" height="25" viewBox="0 0 26 25"><path d="M.8.8h9.6v9.6h-9.6zM15.0.8h9.6v9.6h-9.6zM.8 14.8h9.6v9.4h-9.6zM15.0 14.8h9.6v9.4h-9.6z" stroke="#31363b" fill="none" stroke-width="1.1"/></svg><svg style="left:302.9px;top:732.7px" width="31" height="23" viewBox="0 0 31 23"><path d="M1.7.8h27.2v18h-27.2z" stroke="#31363b" fill="none" stroke-width="1.1"/><path d="M.7 19.0h29.4v2.6h-29.4z" fill="#31363b" stroke="#31363b" stroke-width=".8"/><path d="M1.6 20.3h27.6" stroke="#dff2fa" stroke-width=".7"/></svg><svg style="left:430.0px;top:733.0px" width="25" height="25" viewBox="0 0 25 25"><circle cx="12.2" cy="12" r="11.3" stroke="#31363b" fill="none" stroke-width="1.1"/><path d="M12.2 3.5v9.3h7.6" stroke="#31363b" fill="none" stroke-width="1.1"/></svg><svg style="left:554.7px;top:733.0px" width="25" height="25" viewBox="0 0 25 25"><circle cx="12.2" cy="12" r="11.3" stroke="#31363b" fill="none" stroke-width="1.1"/><path d="M15.4 4.8l-7.4 7.2l7.4 7.2" stroke="#31363b" fill="none" stroke-width="1.1"/></svg><div class="t" style="left:40.9px;top:774px;font-size:13.6px;letter-spacing:0.02px;color:#31363b;">Favorites</div><div class="t" style="left:154.9px;top:774px;font-size:13.6px;letter-spacing:0.25px;color:#31363b;">Applications</div><div class="t" style="left:286.8px;top:774px;font-size:13.6px;letter-spacing:0.42px;color:#31363b;">Computer</div><div class="t" style="left:419.9px;top:774px;font-size:13.6px;letter-spacing:0.38px;color:#31363b;">History</div><div class="t" style="left:548.7px;top:774px;font-size:13.6px;letter-spacing:-0.25px;color:#31363b;">Leave</div></div>
<div id="dol">
<div id="dtitle"></div>
<svg style="left:7.0px;top:6.0px" width="23" height="22" viewBox="0 0 23 22" ><defs><linearGradient id="tf" x1="0" y1="0" x2="0" y2="1"><stop offset="0" stop-color="#4aa3ee"/><stop offset="1" stop-color="#1f6fd6"/></linearGradient></defs>
<path d="M0.5 1.5h8l2 2h12v17h-22z" fill="#1565c0"/><path d="M1.5 4.5h20v3h-20z" fill="#fff"/><path d="M0.3 6.5h22.4v15h-22.4z" fill="url(#tf)"/><path d="M0.3 20.5h22.4v1h-22.4z" fill="#1a5fb4"/></svg><div class="t" style="left:474.6px;top:11px;font-size:16px;letter-spacing:1.22px;color:#fcfcfc;-webkit-text-stroke:.08px;">Home — Dolphin</div><svg style="left:973px;top:9px" width="13" height="18" viewBox="0 0 13 18"><path d="M2.2 4.6c.3-2 1.9-3.1 4-3.1 2.4 0 4.1 1.4 4.1 3.5 0 1.6-.9 2.5-2.3 3.5-1.2.9-1.7 1.6-1.7 3v.6" fill="none" stroke="#fcfcfc" stroke-width="1.2" stroke-linecap="round"/><circle cx="6.3" cy="15.4" r=".9" fill="#fcfcfc"/></svg><svg style="left:1001px;top:12px" width="16" height="12" viewBox="0 0 16 12"><path d="M1.5 2.5l6.5 6.5l6.5-6.5" fill="none" stroke="#fcfcfc" stroke-width="1.3"/></svg><svg style="left:1031px;top:11px" width="16" height="12" viewBox="0 0 16 12"><path d="M1.5 9.5l6.5-6.5l6.5 6.5" fill="none" stroke="#fcfcfc" stroke-width="1.3"/></svg><svg style="left:1058px;top:6px" width="22" height="22" viewBox="0 0 22 22"><circle cx="11" cy="11.2" r="10.8" fill="#fcfcfc"/><path d="M6.2 6.4l9.6 9.6M15.8 6.4l-9.6 9.6" stroke="#485159" stroke-width="1.4" fill="none"/></svg>
<svg style="left:13.0px;top:49.0px" width="22" height="22" viewBox="0 0 22 22" ><path d="M16 1.5L5.5 11L16 20.5" fill="none" stroke="#232627" stroke-width="1.2"/></svg><svg style="left:32.0px;top:71.0px" width="8" height="6" viewBox="0 0 8 6" ><path d="M1 1.2l3 3l3-3" fill="none" stroke="#232627" stroke-width="1.3"/></svg><svg style="left:56.0px;top:49.0px" width="22" height="22" viewBox="0 0 22 22" ><path d="M6 1.5L16.5 11L6 20.5" fill="none" stroke="#a3a6a8" stroke-width="1.2"/></svg><svg style="left:75.0px;top:71.0px" width="8" height="6" viewBox="0 0 8 6" ><path d="M1 1.2l3 3l3-3" fill="none" stroke="#b3b6b8" stroke-width="1.3"/></svg><svg style="left:97.0px;top:49.0px" width="22" height="22" viewBox="0 0 22 22" ><path d="M1.5 15L11 5.2L20.5 15" fill="none" stroke="#232627" stroke-width="1.2"/></svg><div class="sep" style="left:135px"></div><div class="abs" style="left:141px;top:40px;width:40px;height:40px;background:#cdcfd0;border-radius:3px"></div><svg style="left:152.0px;top:50.0px" width="20" height="20" viewBox="0 0 20 20" ><rect x=".5" y=".5" width="7.6" height="7.6" fill="none" stroke="#232627"/><rect x="11" y="0" width="8.6" height="8.6" fill="#232627"/><rect x="0" y="11" width="8.6" height="8.6" fill="#232627"/><rect x="11.5" y="11.5" width="7.6" height="7.6" fill="none" stroke="#232627"/></svg><svg style="left:193.0px;top:50.0px" width="21" height="20" viewBox="0 0 21 20" ><rect x=".5" y=".5" width="7.6" height="7.6" fill="none" stroke="#232627"/><rect x="0" y="11" width="8.6" height="8.6" fill="#232627"/><path d="M11 2.5h9.5M11 6.5h9M11 13.5h4.5M11 17.5h4.5" stroke="#232627" stroke-width="1.1" fill="none"/></svg><svg style="left:236.0px;top:50.0px" width="21" height="20" viewBox="0 0 21 20" ><rect x=".5" y=".5" width="6.6" height="6.6" fill="none" stroke="#232627"/><rect x="11.5" y=".5" width="7.6" height="6.6" fill="none" stroke="#232627"/><rect x="11" y="11" width="8.6" height="8.6" fill="#232627"/><path d="M7 3.5h4.5M9.5 3.5v12h2" stroke="#232627" stroke-width="1.1" fill="none"/></svg><div class="sep" style="left:272px"></div><svg style="left:292.0px;top:49.0px" width="21" height="21" viewBox="0 0 21 21" ><path d="M1 1.4h7.8M1 5.2h6.4M1 9h8.4M1 12.9h6.4M1 16.7h8.4M1 20.2h7.4" stroke="#232627" stroke-width="1.1" fill="none"/><path d="M12.7 12.4V2.2M10 4.9l2.7-2.8l2.7 2.8M16.6 8.5v10.7M13.9 16.6l2.7 2.8l2.7-2.8" stroke="#232627" stroke-width="1.1" fill="none"/></svg><div class="t" style="left:320.8px;top:53px;font-size:16px;letter-spacing:0.52px;">Sort By</div><svg style="left:927.0px;top:50.0px" width="20" height="20" viewBox="0 0 20 20" ><rect x=".6" y=".6" width="18.3" height="18.3" fill="none" stroke="#232627" stroke-width="1.2"/><rect x="0" y="-.4" width="19.5" height="4.2" fill="#232627"/><path d="M6.6 3v16.5M9.5 11.5h6M12.5 8.5v6" stroke="#232627" stroke-width="1.2" fill="none"/></svg><div class="t" style="left:954.5px;top:53px;font-size:16px;letter-spacing:0.67px;">Split</div><svg style="left:1011.0px;top:49.0px" width="22" height="22" viewBox="0 0 22 22" ><circle cx="8" cy="8.3" r="6.6" fill="none" stroke="#232627" stroke-width="1.3"/><path d="M12.8 13.2l7.2 7.4" stroke="#232627" stroke-width="1.5" fill="none"/></svg><svg style="left:1053.5px;top:51.0px" width="20" height="17" viewBox="0 0 20 17" ><path d="M0 2.7h20M0 8.6h20M0 14.5h20" stroke="#232627" stroke-width="2.4" fill="none"/></svg><div class="t" style="left:7.5px;top:97px;font-size:16px;letter-spacing:0.05px;color:#83888b;">Places</div><svg style="left:242.0px;top:96.0px" width="12" height="18" viewBox="0 0 12 18" ><path d="M2.3 2.2l6.4 6.6l-6.4 6.6" fill="none" stroke="#232627" stroke-width="1.3"/></svg><div class="t" style="left:272.6px;top:98px;font-size:16px;letter-spacing:0.92px;font-weight:700;-webkit-text-stroke:0;">Home</div>
<div class="abs" style="left:8px;top:124px;width:222px;height:26.5px;background:#3daee9"></div><svg style="left:12.0px;top:129.2px" width="16" height="16" viewBox="0 0 16 16" ><path d="M1.2 8.6L8 1.8l6.8 6.8M3 7.5v7h3.6v-4h2.8v4H13v-7M11.2 4.6V2.3h1.6v3.8" stroke="#fcfcfc" fill="none" stroke-width="1.15"/></svg><div class="t" style="left:34.7px;top:131px;font-size:16px;letter-spacing:1.34px;color:#fcfcfc;">Home</div><svg style="left:12.0px;top:156.6px" width="16" height="16" viewBox="0 0 16 16" ><rect x="1.6" y="1.6" width="12.8" height="12.8" stroke="#232627" fill="none" stroke-width="1.15"/><path d="M3.5 11.6h9" stroke="#232627" fill="none" stroke-width="1.15"/></svg><div class="t" style="left:34.7px;top:158px;font-size:16px;letter-spacing:0.77px;color:#232627;">Desktop</div><svg style="left:12.0px;top:184.2px" width="16" height="16" viewBox="0 0 16 16" ><path d="M2.6 11.5V1.6h5.2l2 2M5.6 4.6h5l2.8 2.8v7h-7.8z" stroke="#232627" fill="none" stroke-width="1.15"/><path d="M10.3 4.4v3.3h3.3z" fill="#232627"/></svg><div class="t" style="left:34.7px;top:186px;font-size:16px;letter-spacing:0.83px;color:#232627;">Documents</div><svg style="left:12.0px;top:211.4px" width="16" height="16" viewBox="0 0 16 16" ><path d="M8 1.5v8.5M4.2 6.4L8 10.2l3.8-3.8M1.5 13.6h13" stroke="#232627" fill="none" stroke-width="1.15"/><path d="M6.9 1.5h2.2v2H6.9z" stroke="#232627" fill="none" stroke-width="1.15"/></svg><div class="t" style="left:34.7px;top:213px;font-size:16px;letter-spacing:0.79px;color:#232627;">Downloads</div><svg style="left:12.0px;top:239.0px" width="16" height="16" viewBox="0 0 16 16" ><path d="M2.6 3.6h10.8M3.6 3.6v10.8h8.8V3.6M6 3.4V1.8h4v1.6" stroke="#232627" fill="none" stroke-width="1.15"/><path d="M6.5 6v6M9.5 6v6" stroke="#232627" stroke-width="1.6" fill="none"/></svg><div class="t" style="left:34.7px;top:240px;font-size:16px;letter-spacing:0.37px;color:#232627;">Trash</div><div class="t" style="left:7.3px;top:278px;font-size:16px;letter-spacing:0.73px;color:#83888b;">Remote</div><svg style="left:12.0px;top:309.0px" width="16" height="16" viewBox="0 0 16 16" ><circle cx="8" cy="8" r="6.4" stroke="#232627" fill="none" stroke-width="1.15"/><circle cx="5.6" cy="8" r="1.2" fill="#232627"/><circle cx="9.8" cy="5.4" r="1.2" fill="#232627"/><circle cx="9.8" cy="10.6" r="1.2" fill="#232627"/><path d="M5.6 8l4.2-2.6M5.6 8l4.2 2.6" stroke="#232627" stroke-width=".7"/></svg><div class="t" style="left:34.7px;top:310px;font-size:16px;letter-spacing:1.20px;color:#232627;">Network</div><div class="t" style="left:7.3px;top:348px;font-size:16px;letter-spacing:0.38px;color:#83888b;">Recent</div><svg style="left:12.0px;top:379.3px" width="16" height="16" viewBox="0 0 16 16" ><path d="M7 14.4H2.6V1.6h6.6l3.2 3.2v2.6" stroke="#232627" fill="none" stroke-width="1.15"/><path d="M8.8 1.6v3.6h3.6z" fill="#232627"/><circle cx="10.8" cy="11.2" r="3.2" stroke="#232627" fill="none" stroke-width="1.15"/><path d="M10.8 9.4v2h1.6" stroke="#232627" stroke-width="1" fill="none"/></svg><div class="t" style="left:34.7px;top:381px;font-size:16px;letter-spacing:0.17px;color:#232627;">Recent Files</div><svg style="left:12.0px;top:406.5px" width="16" height="16" viewBox="0 0 16 16" ><path d="M6.6 13.4H1.6V2.6" stroke="#232627" fill="none" stroke-width="1.15"/><path d="M1 1.6h5.4l1.6 1.8h6.4v4.2h-1.2V4.8H2.2V3H1z" fill="#232627"/><circle cx="10.8" cy="11.2" r="3.2" stroke="#232627" fill="none" stroke-width="1.15"/><path d="M10.8 9.4v2h1.6" stroke="#232627" stroke-width="1" fill="none"/></svg><div class="t" style="left:34.7px;top:408px;font-size:16px;letter-spacing:0.40px;color:#232627;">Recent Locations</div><svg style="left:12.0px;top:433.9px" width="16" height="16" viewBox="0 0 16 16" ><rect x="1.6" y="3.2" width="12.8" height="11.2" stroke="#232627" fill="none" stroke-width="1.15"/><path d="M1.6 3h12.8v2.4H1.6z" fill="#232627"/><path d="M4 1v3M8 1v3M12 1v3" stroke="#232627" stroke-width="1.6"/><path d="M3.6 7h2v2h-2zM7 7h2v2H7zM10.4 7h2v2h-2zM3.6 10.4h2v2h-2zM7 10.4h2v2H7zM10.4 10.4h2v2h-2z" fill="#232627"/></svg><div class="t" style="left:34.7px;top:435px;font-size:16px;letter-spacing:0.81px;color:#232627;">Modified Today</div><svg style="left:12.0px;top:461.1px" width="16" height="16" viewBox="0 0 16 16" ><rect x="1.6" y="3.2" width="12.8" height="11.2" stroke="#232627" fill="none" stroke-width="1.15"/><path d="M1.6 3h12.8v2.4H1.6z" fill="#232627"/><path d="M4 1v3M8 1v3M12 1v3" stroke="#232627" stroke-width="1.6"/><path d="M3.6 7h2v2h-2zM7 7h2v2H7zM10.4 7h2v2h-2zM3.6 10.4h2v2h-2zM7 10.4h2v2H7zM10.4 10.4h2v2h-2z" fill="#232627"/></svg><div class="t" style="left:34.7px;top:463px;font-size:16px;letter-spacing:0.68px;color:#232627;">Modified Yesterday</div><div class="t" style="left:7.1px;top:501px;font-size:16px;letter-spacing:0.21px;color:#83888b;">Search For</div><svg style="left:12.0px;top:531.5px" width="16" height="16" viewBox="0 0 16 16" ><path d="M1.5 2.6h8M1.5 5.3h13M1.5 8h9.5M1.5 10.7h13M1.5 13.4h9.5" stroke="#232627" stroke-width="1.25" fill="none"/></svg><div class="t" style="left:34.7px;top:533px;font-size:16px;letter-spacing:0.90px;color:#232627;">Documents</div><svg style="left:12.0px;top:559.3px" width="16" height="16" viewBox="0 0 16 16" ><rect x="1.6" y="1.6" width="12.8" height="12.8" stroke="#232627" fill="none" stroke-width="1.15"/><circle cx="5" cy="5" r="1.3" fill="#232627"/><path d="M2.2 13.6l3.6-4.2l2 2.2l2.2-1.4l3.6 3.4z" fill="#232627"/></svg><div class="t" style="left:34.7px;top:561px;font-size:16px;letter-spacing:0.99px;color:#232627;">Images</div><svg style="left:12.0px;top:586.2px" width="16" height="16" viewBox="0 0 16 16" ><path d="M5.4 12.2V2.4h8.8v8" stroke="#232627" fill="none" stroke-width="1.15"/><path d="M5.4 2h8.8v3H5.4z" fill="#232627"/><circle cx="3.6" cy="12.4" r="2.1" fill="#232627"/><circle cx="12.4" cy="10.6" r="2.1" fill="#232627"/></svg><div class="t" style="left:34.7px;top:588px;font-size:16px;letter-spacing:0.97px;color:#232627;">Audio</div><svg style="left:12.0px;top:615.0px" width="16" height="16" viewBox="0 0 16 16" ><rect x="1.6" y="1.6" width="12.8" height="12.8" stroke="#232627" fill="none" stroke-width="1.15"/><path d="M1.6 1.6h2.6v12.8H1.6zM11.8 1.6h2.6v12.8h-2.6zM4 7.2h8v1.6H4z" fill="#232627"/><path d="M2.3 3.4h1.2M2.3 6h1.2M2.3 10h1.2M2.3 12.6h1.2M12.5 3.4h1.2M12.5 6h1.2M12.5 10h1.2M12.5 12.6h1.2" stroke="#eff0f1" stroke-width="1.1"/></svg><div class="t" style="left:34.7px;top:616px;font-size:16px;letter-spacing:0.59px;color:#232627;">Videos</div>
<div id="dview"><svg style="left:57.7px;top:19.3px" width="73" height="66" viewBox="0 0 73 66"><defs><linearGradient id="dk1" x1="0" y1="1" x2="1" y2="0"><stop offset="0" stop-color="#2586c4"/><stop offset=".55" stop-color="#1f9fa8"/><stop offset="1" stop-color="#18c494"/></linearGradient>
<linearGradient id="dk2" x1="0" y1="0" x2="1" y2="0"><stop offset="0" stop-color="#e0465f"/><stop offset="1" stop-color="#a4489c"/></linearGradient>
<linearGradient id="dk3" x1="0" y1="0" x2="1" y2="1"><stop offset="0" stop-color="#4a6a6c"/><stop offset="1" stop-color="#5b5d60"/></linearGradient></defs>
<rect x="0" y="0" width="73" height="65" fill="url(#dk1)"/>
<path d="M73 1.2L24.2 38L48.5 60H73z" fill="url(#dk2)"/>
<path d="M0 55L24.2 38L48.5 60V61H0z" fill="url(#dk3)"/>
<rect x="0" y="60.6" width="73" height="4.4" fill="#dfe1e3"/>
<rect x="0" y="64.4" width="73" height=".9" fill="#b9bcbe"/>
<rect x="3.5" y="62" width="3.4" height="1.8" fill="#888c8f"/><rect x="60.6" y="62" width="2" height="1.8" fill="#a9acae"/><rect x="64.6" y="62" width="5" height="1.8" fill="#9a9da0"/></svg><svg style="left:222.8px;top:19.3px" width="73" height="66" viewBox="0 0 73 66"><defs><linearGradient id="g1" x1="0" y1="0" x2="0" y2="1"><stop offset="0" stop-color="#6cc0ee"/><stop offset="1" stop-color="#40aee8"/></linearGradient></defs>
<path d="M1 0.3h30.6l3.6 4.9H71.6v30H1z" fill="#1a80bb"/>
<path d="M0 17.4h23.6l4.6-5.1H72.6V65H0z" fill="url(#g1)"/>
<path d="M0 64h72.6v1.2H0z" fill="#2f9bd6"/>
<path d="M0 17.4h23.6l4.6-5.1H72.6v1H28.6l-4.6 5.1H0z" fill="#8fd0f3" opacity=".55"/>
<g transform="translate(24.3,26.5)"><path d="M2.6 1.4h18.8v15.4l-6.4 6.8H2.6z" stroke="#1a7fb8" fill="none" stroke-width="1.2"/><path d="M14.6 23.4v-6.8h6.6z" fill="#1a7fb8"/></g></svg><svg style="left:386.8px;top:19.3px" width="73" height="66" viewBox="0 0 73 66"><defs><linearGradient id="g2" x1="0" y1="0" x2="0" y2="1"><stop offset="0" stop-color="#6cc0ee"/><stop offset="1" stop-color="#40aee8"/></linearGradient></defs>
<path d="M1 0.3h30.6l3.6 4.9H71.6v30H1z" fill="#1a80bb"/>
<path d="M0 17.4h23.6l4.6-5.1H72.6V65H0z" fill="url(#g2)"/>
<path d="M0 64h72.6v1.2H0z" fill="#2f9bd6"/>
<path d="M0 17.4h23.6l4.6-5.1H72.6v1H28.6l-4.6 5.1H0z" fill="#8fd0f3" opacity=".55"/>
<g transform="translate(24.3,26.5)"><path d="M10 1h4v9.5h-4zM5 10.2l7 7.4l7-7.4M1 20.5v2.3h22v-2.3" stroke="#1a7fb8" fill="none" stroke-width="1.2"/></g></svg><svg style="left:551.0px;top:19.3px" width="73" height="66" viewBox="0 0 73 66"><defs><linearGradient id="g3" x1="0" y1="0" x2="0" y2="1"><stop offset="0" stop-color="#6cc0ee"/><stop offset="1" stop-color="#40aee8"/></linearGradient></defs>
<path d="M1 0.3h30.6l3.6 4.9H71.6v30H1z" fill="#1a80bb"/>
<path d="M0 17.4h23.6l4.6-5.1H72.6V65H0z" fill="url(#g3)"/>
<path d="M0 64h72.6v1.2H0z" fill="#2f9bd6"/>
<path d="M0 17.4h23.6l4.6-5.1H72.6v1H28.6l-4.6 5.1H0z" fill="#8fd0f3" opacity=".55"/>
<g transform="translate(24.3,26.5)"><path d="M7.6 19V1.6h15v14.8" stroke="#1a7fb8" fill="none" stroke-width="1.2"/><path d="M7.6 4.6h15" stroke="#1a7fb8" stroke-width="1.6"/><circle cx="5" cy="20" r="3.1" fill="#1a7fb8"/><circle cx="20" cy="17" r="3.1" fill="#1a7fb8"/></g></svg><svg style="left:715.6px;top:19.3px" width="73" height="66" viewBox="0 0 73 66"><defs><linearGradient id="g4" x1="0" y1="0" x2="0" y2="1"><stop offset="0" stop-color="#6cc0ee"/><stop offset="1" stop-color="#40aee8"/></linearGradient></defs>
<path d="M1 0.3h30.6l3.6 4.9H71.6v30H1z" fill="#1a80bb"/>
<path d="M0 17.4h23.6l4.6-5.1H72.6V65H0z" fill="url(#g4)"/>
<path d="M0 64h72.6v1.2H0z" fill="#2f9bd6"/>
<path d="M0 17.4h23.6l4.6-5.1H72.6v1H28.6l-4.6 5.1H0z" fill="#8fd0f3" opacity=".55"/>
<g transform="translate(24.3,26.5)"><rect x="-.4" y="-.4" width="24" height="24" stroke="#1a7fb8" fill="none" stroke-width="1.2"/><circle cx="5" cy="4.5" r="2.4" fill="#1a7fb8"/><path d="M1.4 22.6l5.4-5.6l2.6 2.6l5.8-6l7.6 9z" fill="#1a7fb8"/></g></svg><svg style="left:57.7px;top:139.6px" width="73" height="66" viewBox="0 0 73 66"><defs><linearGradient id="g5" x1="0" y1="0" x2="0" y2="1"><stop offset="0" stop-color="#6cc0ee"/><stop offset="1" stop-color="#40aee8"/></linearGradient></defs>
<path d="M1 0.3h30.6l3.6 4.9H71.6v30H1z" fill="#1a80bb"/>
<path d="M0 17.4h23.6l4.6-5.1H72.6V65H0z" fill="url(#g5)"/>
<path d="M0 64h72.6v1.2H0z" fill="#2f9bd6"/>
<path d="M0 17.4h23.6l4.6-5.1H72.6v1H28.6l-4.6 5.1H0z" fill="#8fd0f3" opacity=".55"/>
<g transform="translate(24.3,26.5)"><rect x="-.6" y="-.6" width="25.4" height="25.4" fill="#1a7fb8"/><path d="M4.2 1.4h15.6v9.8H4.2zM4.2 13h15.6v9.8H4.2z" fill="#5ab9ec"/><path d="M.9 1.4h1.8v2.4H.9zM.9 6.4h1.8v2.4H.9zM.9 11h1.8v2.4H.9zM.9 15.6h1.8v2.4H.9zM.9 20.4h1.8v2.4H.9zM21.4 1.4h1.8v2.4h-1.8zM21.4 6.4h1.8v2.4h-1.8zM21.4 11h1.8v2.4h-1.8zM21.4 15.6h1.8v2.4h-1.8zM21.4 20.4h1.8v2.4h-1.8z" fill="#5ab9ec"/></g></svg><div class="t" style="left:62.5px;top:99px;font-size:16px;letter-spacing:0.82px;">Desktop</div><div class="abs" style="left:60px;top:117.5px;width:67px;height:1px;background:#cfe6f3"></div><div class="t" style="left:214.3px;top:99px;font-size:16px;letter-spacing:0.92px;">Documents</div><div class="t" style="left:380.2px;top:99px;font-size:16px;letter-spacing:0.83px;">Downloads</div><div class="t" style="left:564.7px;top:99px;font-size:16px;letter-spacing:0.83px;">Music</div><div class="t" style="left:720.8px;top:99px;font-size:16px;letter-spacing:0.54px;">Pictures</div><div class="t" style="left:68.8px;top:219px;font-size:16px;letter-spacing:0.45px;">Videos</div></div>
<div class="t" style="left:237.9px;top:628px;font-size:16px;letter-spacing:0.52px;">6 Folders</div><div class="abs" style="left:582.5px;top:631.5px;width:244.5px;height:6.5px;border-radius:3.5px;background:#b3b5b6"></div><div class="abs" style="left:582.5px;top:631.5px;width:62px;height:6.5px;border-radius:3.5px;background:#3daee9"></div><div class="abs" style="left:637.7px;top:623.7px;width:20px;height:20px;border-radius:50%;background:#fcfcfc;border:1px solid #a4a7a9;box-shadow:0 1px 1px rgba(0,0,0,.15)"></div><div class="abs" style="left:837.7px;top:631.5px;width:132px;height:6.5px;border-radius:3.5px;background:#b3b5b6"></div><div class="abs" style="left:837.7px;top:631.5px;width:57px;height:6.5px;border-radius:3.5px 0 0 3.5px;background:#3daee9"></div><div class="t" style="left:974.9px;top:628px;font-size:16px;letter-spacing:0.30px;">220.1 GiB free</div>
</div>
<div id="panel"><div class="abs" style="left:5px;top:2px;width:38px;height:3.4px;background:#3daee9"></div><svg style="left:8.0px;top:8.0px" width="32" height="32" viewBox="0 0 32 32"><circle cx="10" cy="5.5" r="1.3" fill="#232627"/><circle cx="6.6" cy="15.4" r="2.5" fill="#232627"/><circle cx="13" cy="24.8" r="2.9" fill="#232627"/><path d="M19.5 5.5l6.6 6.6l-6.6 6.6" fill="none" stroke="#232627" stroke-width="3.2"/></svg><div class="abs" style="left:53px;top:2px;width:340px;height:46px;background:#c5d9e3"></div><div class="abs" style="left:53px;top:2px;width:340px;height:3px;background:#9db3be"></div><svg style="left:60.0px;top:9.0px" width="31" height="29" viewBox="0 0 31 29"><defs><linearGradient id="pf" x1="0" y1="0" x2="1" y2="1"><stop offset="0" stop-color="#5aaef0"/><stop offset="1" stop-color="#1c6fd4"/></linearGradient></defs>
<path d="M.5 1h10.5l2.5 3h16.5v22h-29.5z" fill="#1d62b0"/><path d="M1.5 6h27.5v5h-27.5z" fill="#fdfdfd"/><path d="M.3 9.5h29.7v19h-29.7z" fill="url(#pf)"/><path d="M.3 27.5h29.7v1h-29.7z" fill="#1a5cb0"/></svg><div class="t" style="left:100.2px;top:17px;font-size:16.4px;letter-spacing:0.93px;color:#232627;">Home — Dolphin</div><svg style="left:1566.0px;top:16.0px" width="18" height="17" viewBox="0 0 18 17"><path d="M9 1.5v1.3M4.8 12.5c.8-1.5 1-3 1-5c0-2.3 1.4-3.7 3.2-3.7s3.2 1.4 3.2 3.7c0 2 .2 3.5 1 5z" stroke="#232627" fill="none" stroke-width="1.1"/><path d="M3.2 12.6h11.6" stroke="#232627" fill="none" stroke-width="1.1"/><path d="M7.3 14.3h3.4l-1.7 1.9z" fill="#232627"/><path d="M3.6 2.2c-1.3 1.3-1.9 2.8-1.9 4.6M5.3 3.6c-.8.9-1.2 1.9-1.2 3M14.4 2.2c1.3 1.3 1.9 2.8 1.9 4.6M12.7 3.6c.8.9 1.2 1.9 1.2 3" stroke="#232627" stroke-width=".9" fill="none"/></svg><svg style="left:1597.0px;top:15.5px" width="18" height="18" viewBox="0 0 18 18"><circle cx="8.9" cy="8.9" r="7.7" stroke="#232627" fill="none" stroke-width="1.1"/><path d="M6.8 5.4l6 3.5l-6 3.5z" fill="#232627"/></svg><svg style="left:1628.0px;top:15.5px" width="18" height="18" viewBox="0 0 18 18"><path d="M1 6.4h2.6l5-5v15.2l-5-5h-2.6z" fill="#232627"/><path d="M10.8 5.4c1.6 1.9 1.6 5.3 0 7.2" stroke="#232627" stroke-width="1.3" fill="none"/><path d="M13.2 3.4c2.6 3 2.6 8.2 0 11.2" stroke="#9aa4a8" stroke-width="1.1" fill="none"/></svg><svg style="left:1662.0px;top:16.0px" width="12" height="18" viewBox="0 0 12 18"><path d="M1.4 4.8l8.6 7.4l-4.3 3.9v-15.2l4.3 3.9l-8.6 7.4" stroke="#232627" fill="none" stroke-width="1.1"/></svg><svg style="left:1693.0px;top:16.0px" width="12" height="18" viewBox="0 0 12 18"><rect x="1.6" y=".6" width="9.2" height="15.8" rx=".8" stroke="#232627" fill="none" stroke-width="1.3"/><path d="M1.6 3.5h9.2M1.6 13.5h9.2" stroke="#232627" stroke-width="1.1"/><circle cx="6.2" cy="8.5" r="2.3" stroke="#232627" fill="none" stroke-width="1"/><path d="M6.2 5.1v1M6.2 10.9v1M2.8 8.5h1M8.6 8.5h1" stroke="#232627" stroke-width=".9"/></svg><svg style="left:1719.0px;top:16.0px" width="22" height="17" viewBox="0 0 22 17"><path d="M1 5.6c5.6-5.4 14.4-5.4 20 0" stroke="#232627" fill="none" stroke-width="1.1"/><path d="M4 8.6c4-3.8 10-3.8 14 0" stroke="#232627" fill="none" stroke-width="1.1"/><path d="M7 11.4c2.4-2.2 5.6-2.2 8 0" stroke="#232627" fill="none" stroke-width="1.1"/><circle cx="11" cy="14.2" r="1.5" stroke="#232627" fill="none" stroke-width="1"/></svg><svg style="left:1751.5px;top:21.0px" width="13" height="7" viewBox="0 0 13 7"><path d="M.3 6.4l6.1-6l6.1 6z" fill="#232627"/></svg><div class="t" style="left:1782.8px;top:9px;font-size:31.2px;letter-spacing:-0.01px;color:#232627;-webkit-text-stroke:0;">13:37</div><svg style="left:1884.0px;top:12.0px" width="25" height="24" viewBox="0 0 25 24"><rect x=".5" y=".5" width="23" height="23" stroke="#232627" fill="none" stroke-width="1.1"/><path d="M3.5 19.5h17" stroke="#232627" fill="none" stroke-width="1.1"/></svg></div>
</body></html>
